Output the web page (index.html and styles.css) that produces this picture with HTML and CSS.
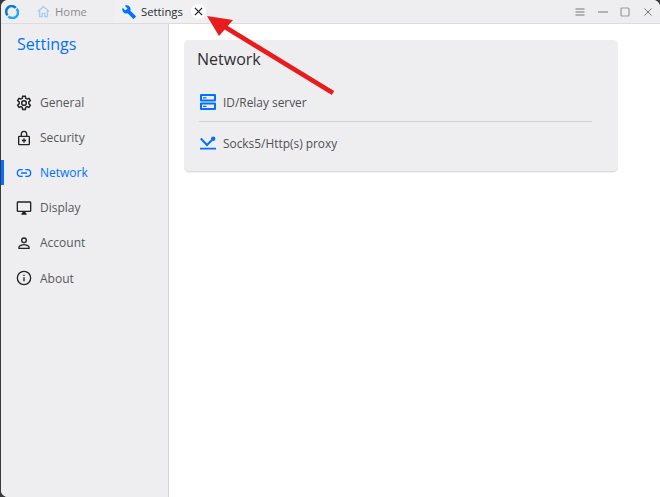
FILE: index.html
```html
<!DOCTYPE html>
<html lang="en">
<head>
<meta charset="utf-8">
<title>Settings</title>
<link rel="stylesheet" href="styles.css">
</head>
<body>
<div class="window">
  <header class="titlebar">
    <svg class="logo" viewBox="0 0 14 14"><path d="M10.800 2.900A5.500 5.500 0 0 0 2.600 10.300" fill="none" stroke="#0a78d0" stroke-width="2.500"/><path d="M3.400 11.300A5.500 5.500 0 0 0 11.600 3.800" fill="none" stroke="#1fa8f2" stroke-width="2.500"/></svg>
    <div class="tab tab-home">
      <svg class="home-icon" viewBox="0 0 14 14"><path d="M1 7 7 1.500 13 7M2.800 6v6.500h2.800V9h2.800v3.500h2.800V6" fill="none" stroke="#a9cdf2" stroke-width="1.500"/></svg>
      <span>Home</span>
    </div>
    <div class="tab tab-settings">
      <svg class="wrench" viewBox="0 0 24 24"><path fill="#0071ff" d="M23.500 19l-9.300-9.300c.9-2.500.5-5.300-1.500-7.300-2-2-5.300-2.500-7.900-1.300L9.500 5.800 5.800 9.500 1.100 4.800C-.1 7.300.4 10.600 2.400 12.600c2 2 4.800 2.500 7.300 1.500l9.300 9.400c.4.400 1 .4 1.400 0l3-3c.6-.6.600-2.100.100-1.500z"/></svg>
      <span>Settings</span>
      <span class="close-chip"><svg viewBox="0 0 10 10"><path d="M1 1l8 8M9 1l-8 8" stroke="#222" stroke-width="1.400"/></svg></span>
    </div>
    <div class="controls">
      <svg viewBox="0 0 10 10"><path d="M.5 2h9M.5 5h9M.5 8h9" stroke="#777" stroke-width="1"/></svg>
      <svg viewBox="0 0 10 10"><path d="M0 5h10" stroke="#777" stroke-width="1"/></svg>
      <svg viewBox="0 0 10 10"><rect x="1" y="1" width="8" height="8" rx="1" fill="none" stroke="#999" stroke-width="1.200"/></svg>
      <svg viewBox="0 0 10 10"><path d="M1.500 1.500l7 7M8.500 1.500l-7 7" stroke="#777" stroke-width="1"/></svg>
    </div>
  </header>
  <div class="body-row">
    <nav class="sidebar">
      <h1 class="side-title">Settings</h1>
      <ul class="menu">
        <li class="item"><svg class="ico" viewBox="0 0 24 24"><path fill="none" stroke="#222" stroke-width="2.200" d="M12 8.500a3.500 3.500 0 1 0 0 7 3.500 3.500 0 0 0 0-7zM10 2h4l.6 3 2 1.100 2.900-1 2 3.400-2.300 2a7 7 0 0 1 0 2.600l2.300 2-2 3.400-2.900-1-2 1.100-.6 3h-4l-.6-3-2-1.100-2.900 1-2-3.400 2.300-2a7 7 0 0 1 0-2.600l-2.300-2 2-3.400 2.900 1 2-1.100z"/></svg><span>General</span></li>
        <li class="item"><svg class="ico" viewBox="0 0 24 24"><path fill="none" stroke="#222" stroke-width="2" d="M5 9.500h14a1 1 0 0 1 1 1V21a1 1 0 0 1-1 1H5a1 1 0 0 1-1-1V10.500a1 1 0 0 1 1-1zM8 9.500V6a4 4 0 0 1 8 0v3.500M12 12.500v6.500M8.800 15.800h6.400"/></svg><span>Security</span></li>
        <li class="item active"><svg class="ico" viewBox="0 0 24 24"><path fill="none" stroke="#0071ff" stroke-width="2" d="M10 7H7a5 5 0 0 0 0 10h3M14 7h3a5 5 0 0 1 0 10h-3M7.500 12h9"/></svg><span>Network</span></li>
        <li class="item"><svg class="ico" viewBox="0 0 24 24"><path fill="#222" d="M21 2H3a2 2 0 0 0-2 2v12a2 2 0 0 0 2 2h7l-2 3v1h8v-1l-2-3h7a2 2 0 0 0 2-2V4a2 2 0 0 0-2-2zm0 14H3V4h18z"/></svg><span>Display</span></li>
        <li class="item"><svg class="ico" viewBox="0 0 24 24"><path fill="none" stroke="#222" stroke-width="2" d="M12 4.500a3.500 3.500 0 1 0 0 7 3.500 3.500 0 0 0 0-7zM4.500 20v-2c0-2 5-3.500 7.500-3.500s7.500 1.500 7.500 3.500v2z"/></svg><span>Account</span></li>
        <li class="item"><svg class="ico" viewBox="0 0 24 24"><circle cx="12" cy="12" r="10" fill="none" stroke="#222" stroke-width="2"/><path d="M12 11v6M12 7v2" stroke="#222" stroke-width="2"/></svg><span>About</span></li>
      </ul>
    </nav>
    <main class="content">
      <section class="card">
        <h2 class="card-title">Network</h2>
        <div class="row">
          <svg class="row-ico" viewBox="0 0 16 16"><path fill="#0071ff" fill-rule="evenodd" d="M1 0h14a1 1 0 0 1 1 1v5.500a1 1 0 0 1-1 1H1a1 1 0 0 1-1-1V1a1 1 0 0 1 1-1zm1 2v3.500h12V2zM1 8.500h14a1 1 0 0 1 1 1V15a1 1 0 0 1-1 1H1a1 1 0 0 1-1-1V9.500a1 1 0 0 1 1-1zm1 2V14h12v-3.500zM3 3.200h3.500v1.200H3zM3 11.700h3.500v1.200H3z"/></svg>
          <span>ID/Relay server</span>
        </div>
        <hr class="sep">
        <div class="row">
          <svg class="row-ico" viewBox="0 0 16 16"><path d="M0 14.500h16v-1.800H0z" fill="#0071ff"/><path d="M.8 3.500 7 10 12 5" fill="none" stroke="#0071ff" stroke-width="2"/><circle cx="13.200" cy="3.800" r="2.200" fill="#0071ff"/></svg>
          <span>Socks5/Http(s) proxy</span>
        </div>
      </section>
    </main>
  </div>
  <svg class="arrow" viewBox="0 0 140 90" aria-hidden="true"><path d="M128 79 20 13" stroke="#e81c1c" stroke-width="4.600"/><path d="M2 2 28 6 14 22z" fill="#e81c1c"/></svg>
</div>
</body>
</html>
```
FILE: styles.css
```css
* { box-sizing: border-box; }
html, body { margin: 0; height: 100%; }
body { background: #3a3a3c; font-family: "Open Sans", "Noto Sans", sans-serif; overflow: hidden; }
.window {
  position: relative;
  margin-left: 1px;
  height: 497px;
  background: #fff;
  border-radius: 7px 7px 0 7px;
  overflow: hidden;
  display: flex;
  flex-direction: column;
}
.titlebar {
  height: 24px;
  flex: none;
  background: #eeeef0;
  border-bottom: 1px solid #dcdcde;
  display: flex;
  align-items: center;
  padding-left: 4px;
  font-size: 11.300px;
}
.logo { width: 14px; height: 14px; flex: none; }
.tab { display: flex; align-items: center; height: 23px; }
.tab-home { color: #8b8b8e; margin-left: 18px; gap: 5px; width: 77px; }
.home-icon { width: 13px; height: 13px; }
.tab-settings { color: #2a2a2a; gap: 5px; background: #f0f0f2; padding-left: 8px; width: 93px; }
.wrench { width: 14px; height: 14px; }
.close-chip {
  width: 15px; height: 15px; border-radius: 50%; background: #fff;
  display: flex; align-items: center; justify-content: center;
  margin-left: 3px;
}
.close-chip svg { width: 9px; height: 9px; }
.controls { margin-left: auto; display: flex; align-items: center; gap: 12.500px; padding-right: 7.500px; }
.controls svg { width: 10px; height: 10px; display: block; }
.body-row { flex: 1; display: flex; min-height: 0; }
.sidebar {
  width: 168px; flex: none;
  background: #eeeef0;
  border-right: 1px solid #d4d4d6;
}
.side-title {
  margin: 0;
  padding: 9px 0 0 16px;
  font-size: 16px;
  line-height: 22px;
  font-weight: 400;
  color: #0071ff;
}
.menu { list-style: none; margin: 30px 0 0; padding: 0; }
.item {
  height: 35.100px;
  display: flex;
  align-items: center;
  gap: 8px;
  padding-left: 15px;
  font-size: 12px;
  color: #58585b;
  position: relative;
}
.item.active { color: #0071ff; }
.item.active::before {
  content: ""; position: absolute; left: 0; top: 5px; width: 3px; height: 25px; background: #0071ff;
}
.ico { width: 16px; height: 16px; flex: none; }
.content { flex: 1; padding: 16px 42px 0 15px; }
.card {
  background: #eeeef0;
  border-radius: 5px;
  border-bottom: 1px solid #dcdcde;
  box-shadow: 0 1px 1px rgba(0,0,0,.06);
  height: 132px;
  padding: 7px 26px 0 13px;
}
.card-title {
  margin: 0;
  font-size: 16px;
  line-height: 24px;
  font-weight: 400;
  color: #2f2f33;
}
.row {
  display: flex; align-items: center; gap: 7px;
  height: 24px;
  margin-left: 3px;
  font-size: 11.900px;
  color: #505054;
}
.card-title + .row { margin-top: 19px; }
.row-ico { width: 16px; height: 16px; flex: none; }
.sep { margin: 7px 0 9px 2px; border: 0; border-top: 1px solid #d4d4d6; }
.arrow { position: absolute; left: 204px; top: 14px; width: 140px; height: 90px; }
```
